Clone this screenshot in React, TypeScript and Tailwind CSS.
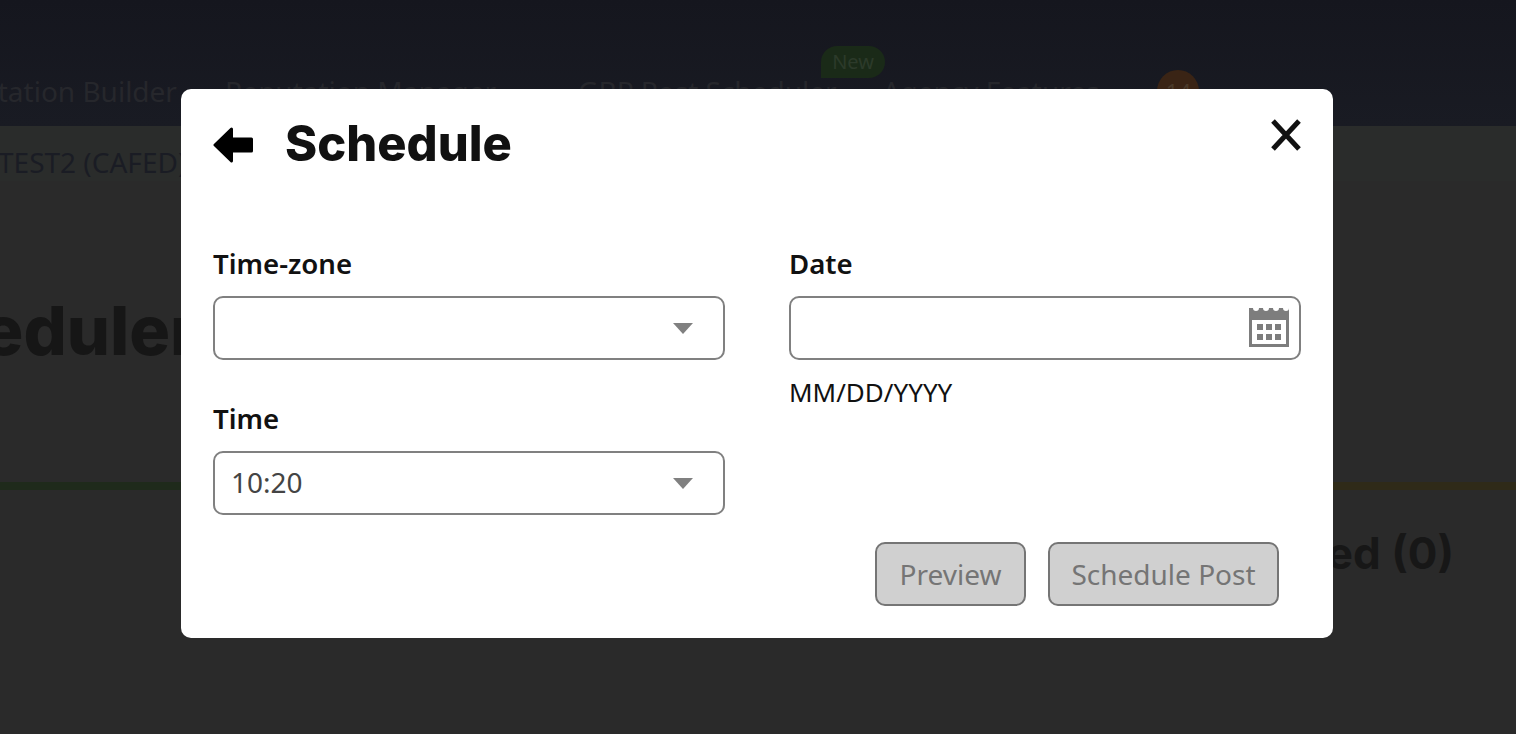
import React from "react";

const NAV_TEXT = "text-[28px] leading-none text-[#26272c] whitespace-nowrap";

function Caret() {
  return (
    <svg width="20" height="11" viewBox="0 0 20 11" className="absolute right-[30px] top-[25px]">
      <path d="M0 0h20L10 11z" fill="#808080" />
    </svg>
  );
}

function CalendarIcon() {
  return (
    <svg width="40" height="40" viewBox="0 0 40 40" className="absolute right-[10px] top-[9px]">
      <path
        fillRule="evenodd"
        fill="#7d7d7d"
        d="M0 1h4a3 3 0 0 0 6 0h4a3 3 0 0 0 6 0h4a3 3 0 0 0 6 0h4a3 3 0 0 0 6 0v39H0zM3 13v24h34V13z"
      />
      <path
        fill="#7d7d7d"
        d="M8 17h6v6H8zM17 17h6v6h-6zM26 17h6v6h-6zM8 27h6v6H8zM17 27h6v6h-6zM26 27h6v6h-6z"
      />
    </svg>
  );
}

function Label({ children }: { children: React.ReactNode }) {
  return <label className="block h-[50px] text-[27.6px] font-semibold leading-[35px] text-[#111]">{children}</label>;
}

export default function App() {
  return (
    <div className="relative h-screen overflow-hidden bg-[#2a2a2a] font-['Noto_Sans',sans-serif]">
      {/* Page behind the dialog */}
      <div className="flex h-[126px] items-start bg-gradient-to-b from-[#15161e] to-[#191b23]">
        <div className="ml-[-70px] mt-[70px] flex items-center">
          <span className={NAV_TEXT}>Reputation Builder</span>
          <span className={`${NAV_TEXT} ml-[48px]`}>Reputation Manager</span>
          <span className={`${NAV_TEXT} relative ml-[82px]`}>
            GBP Post Scheduler
            <span className="absolute left-[243px] top-[-31px] flex h-[32px] w-[64px] items-center justify-center rounded-t-[16px] rounded-br-[16px] bg-[#1a2a18] text-[20px] text-[#2c3a2a]">
              New
            </span>
          </span>
          <span className={`${NAV_TEXT} ml-[46px]`}>Agency Features</span>
          <span className="ml-[58px] flex h-[42px] w-[42px] items-center justify-center rounded-full bg-[#3a2415] text-[22px] text-[#4a3a2a]">
            14
          </span>
        </div>
      </div>
      <div className="bg-[#2a2c2b] pt-[17px] text-[28px] leading-[38px] text-[#1a1c24] whitespace-nowrap">
        <span className="ml-[-2px]">TEST2 (CAFED)</span>
      </div>
      <div className="ml-[-146px] mt-[112px] text-[68px] font-extrabold leading-[74px] text-[#161616] font-['Inter',sans-serif]">
        Scheduler
      </div>
      <div className="mt-[115px] flex h-[8px]">
        <div className="w-1/2 bg-[#1f2a1b]" />
        <div className="w-1/2 bg-[#2f2a18]" />
      </div>
      <div className="mt-[35px] pr-[62px] text-right text-[44px] font-bold leading-[56px] text-[#171717] font-['Inter',sans-serif]">
        Published (0)
      </div>

      {/* Dialog */}
      <div className="absolute left-[181px] top-[89px] h-[549px] w-[1152px] rounded-[10px] bg-white px-[32px]">
        <div className="flex h-[111px] items-center">
          <svg width="40" height="36" viewBox="0 0 40 36" className="mb-[-1px]">
            <path
              d="M18.5 2 2 18l16.5 16V24h20V12h-20z"
              fill="#000"
              stroke="#000"
              strokeWidth="3"
              strokeLinejoin="round"
            />
          </svg>
          <h2 className="ml-[32px] text-[48.8px] font-extrabold leading-none text-[#111] font-['Inter',sans-serif]">
            Schedule
          </h2>
          <svg width="32" height="32" viewBox="0 0 32 32" className="ml-auto mr-[-1px] mt-[-20px]">
            <path d="M3 2 29 30M29 2 3 30" stroke="#111" strokeWidth="5" />
          </svg>
        </div>

        <div className="mt-[46px] grid grid-cols-2 gap-x-[64px]">
          <div>
            <Label>Time-zone</Label>
            <div className="relative h-[64px] rounded-[10px] border-2 border-[#808080]">
              <Caret />
            </div>
            <div className="mt-[41px]">
              <Label>Time</Label>
              <div className="relative flex h-[64px] items-center rounded-[10px] border-2 border-[#808080] pb-[2px] pl-[16px] text-[28px] text-[#444]">
                10:20
                <Caret />
              </div>
            </div>
          </div>
          <div>
            <Label>Date</Label>
            <div className="relative h-[64px] rounded-[10px] border-2 border-[#808080]">
              <CalendarIcon />
            </div>
            <p className="mt-[14px] text-[26px] leading-[36px] text-[#111]">MM/DD/YYYY</p>
          </div>
        </div>

        <div className="mt-[27px] flex justify-end gap-[22px] pr-[22px]">
          <button className="h-[64px] w-[151px] rounded-[10px] border-2 border-[#757575] bg-[#d0d0d0] text-[28px] text-[#757575]">
            Preview
          </button>
          <button className="h-[64px] w-[231px] rounded-[10px] border-2 border-[#757575] bg-[#d0d0d0] text-[28px] text-[#757575]">
            Schedule Post
          </button>
        </div>
      </div>
    </div>
  );
}
